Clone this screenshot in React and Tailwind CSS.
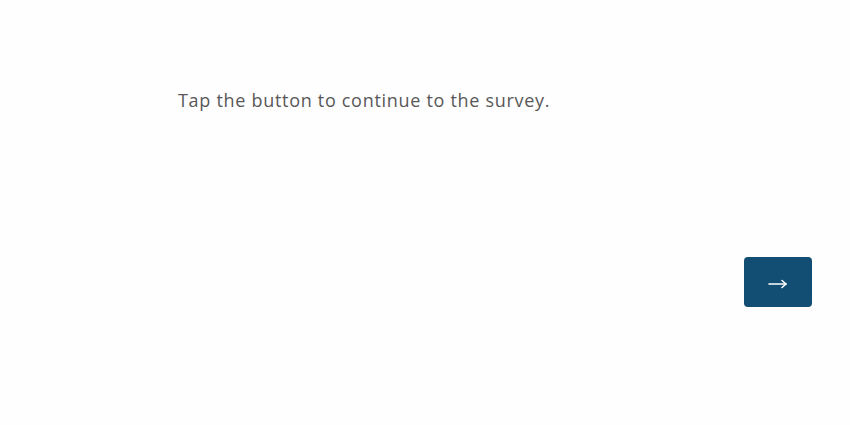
export default function App() {
  return (
    <div className="w-[850px] h-[425px] bg-[#fefefe] flex flex-col" style={{ fontFamily: '"Open Sans", "Liberation Sans", sans-serif' }}>
      <div className="pl-[178px] pt-[87px] h-[217px]">
        <p className="text-[18px] leading-[26px] text-[#585858] tracking-[0.7px]">Tap the button to continue to the survey.</p>
      </div>
      <div className="flex justify-end pr-[38px] pt-[40px]">
        <button className="w-[68px] h-[50px] rounded-[4px] bg-[#124d73] text-white flex items-center justify-center">
          <svg className="mt-[3px]" width="20" height="10" viewBox="0 0 20 10" fill="none" stroke="white" strokeWidth="1.6" strokeLinecap="round" strokeLinejoin="round">
            <path d="M1 5h17" />
            <path d="M14 1.5L18 5l-4 3.5" />
          </svg>
        </button>
      </div>
    </div>
  );
}
